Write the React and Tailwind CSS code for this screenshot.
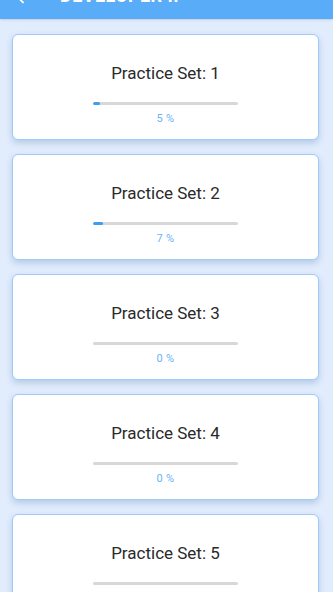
import { ArrowLeft } from 'lucide-react';

const sets = [
  { id: 1, progress: 5 },
  { id: 2, progress: 7 },
  { id: 3, progress: 0 },
  { id: 4, progress: 0 },
  { id: 5, progress: 0 },
];

export default function App() {
  return (
    <div className="h-[592px] overflow-hidden bg-[#e1ecfd]" style={{ fontFamily: 'Roboto, "Liberation Sans", sans-serif' }}>
      {/* App bar (scrolled mostly out of view) */}
      <div className="h-[19px] overflow-hidden bg-[#59acf8] shadow-sm">
        <div className="h-14 -mt-[32px] flex items-center text-white">
          <ArrowLeft size={22} className="ml-[12px]" />
          <h1 className="ml-[26px] text-lg font-bold uppercase tracking-wide">Developer II</h1>
        </div>
      </div>

      {/* Practice sets */}
      <div className="pt-[15px] pl-3 pr-[14px] flex flex-col gap-[14px]">
        {sets.map(s => (
          <div
            key={s.id}
            className="h-[106px] shrink-0 bg-white rounded-md border border-[#9ecbf8] shadow-[0_3px_6px_rgba(70,110,170,0.28)] flex flex-col items-center pt-[28px]"
          >
            <h3 className="text-[17px] leading-5 text-[#2a2a2a]">Practice Set: {s.id}</h3>
            <div className="mt-[19px] w-[145px] h-[3px] bg-[#d8d8d8] rounded-full overflow-hidden">
              <div style={{ width: `${s.progress}%` }} className="h-full bg-[#3f9cf3] rounded-full"></div>
            </div>
            <p className="mt-[7px] text-[11px] leading-[14px] text-[#6ab3f7] tracking-wide">{s.progress} %</p>
          </div>
        ))}
      </div>
    </div>
  );
}
